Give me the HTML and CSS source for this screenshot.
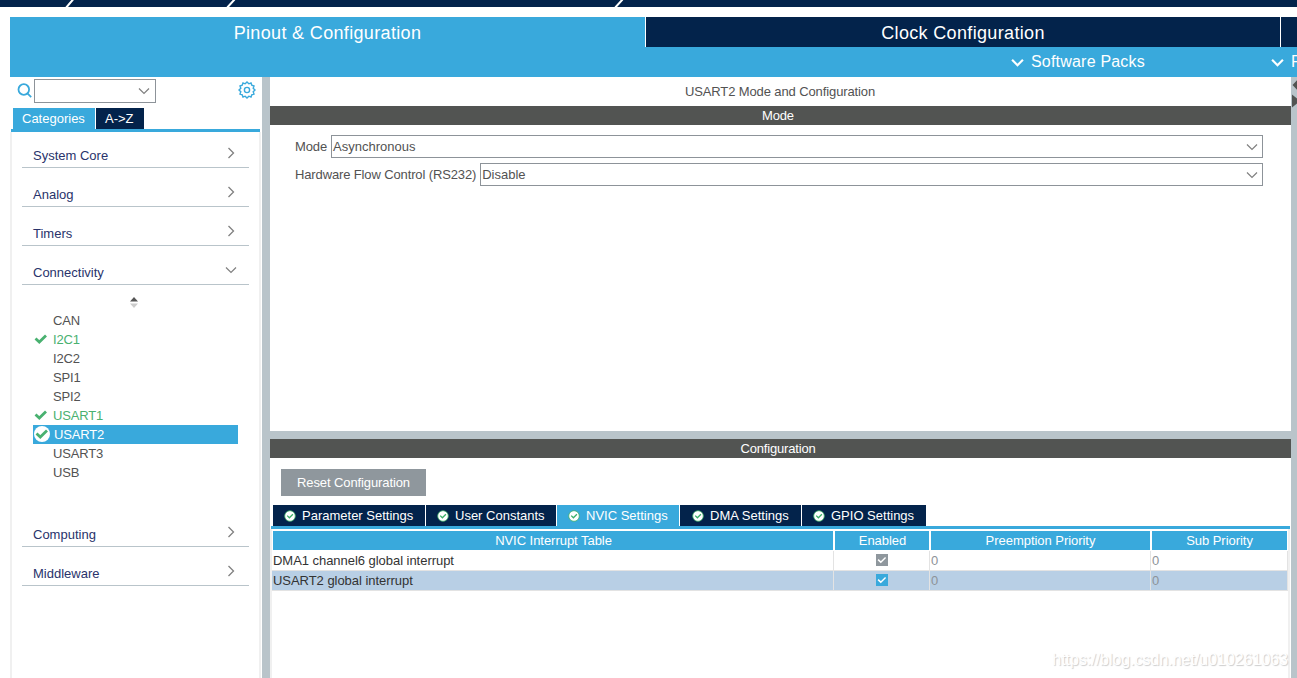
FILE: index.html
```html
<!DOCTYPE html>
<html lang="en">
	<head>
		<meta charset="utf-8">
		<title>Pinout &amp; Configuration</title>
		<link rel="stylesheet" href="styles.css">
	</head>
	<body>
		<!-- shared icons -->
		<svg class="defs" width="0" height="0">
			<symbol id="chevron-right" viewBox="0 0 8 12"><path d="M1.5 1L6.5 6L1.5 11" /></symbol>
			<symbol id="chevron-down" viewBox="0 0 12 8"><path d="M1 1.5L6 6.5L11 1.5" /></symbol>
			<symbol id="tick" viewBox="0 0 14 10"><path d="M1.5 4.5L5.3 8L12 1.5" /></symbol>
			<symbol id="badge" viewBox="0 0 12 12">
				<circle cx="6" cy="6" r="5.3" fill="#fff" stroke="#3cb068" stroke-width="0.8" />
				<path d="M3.2 5.6L5.4 7.8L8.9 4.3" fill="none" stroke="#3cb068" stroke-width="1.3" />
			</symbol>
		</svg>
		<div id="breadcrumb">
			<svg width="1297" height="7"><path d="M66.3 7.5L73 -0.5M227.3 7.5L234.5 -0.5M615.3 7.5L622.5 -0.5" /></svg>
		</div>
		<div id="maintabs">
			<div class="maintab active">Pinout &amp; Configuration</div>
			<div class="maintab">Clock Configuration</div>
			<div class="maintab last"></div>
		</div>
		<div id="submenu">
			<div class="menu packs"><svg class="menu-arrow"><use href="#chevron-down" /></svg><span>Software Packs</span></div>
			<div class="menu"><svg class="menu-arrow"><use href="#chevron-down" /></svg><span>P</span></div>
		</div>
		<div id="content">
			<div id="sidebar">
				<div id="search">
					<svg class="magnifier" viewBox="0 0 16 16"><circle cx="6.8" cy="6.5" r="5.3" /><path d="M10.4 10.4L14.2 14.2" /></svg>
					<div class="combo"><svg class="arrow-down"><use href="#chevron-down" /></svg></div>
					<svg class="gear" viewBox="0 0 18 18"><path d="M9 1L10.8 2.8L13 2L13.8 4.2L16 5L15.2 7.2L17 9L15.2 10.8L16 13L13.8 13.8L13 16L10.8 15.2L9 17L7.2 15.2L5 16L4.2 13.8L2 13L2.8 10.8L1 9L2.8 7.2L2 5L4.2 4.2L5 2L7.2 2.8Z" /><circle cx="9" cy="9" r="2.6" /></svg>
				</div>
				<div class="tabs">
					<div class="tab active w-cat">Categories</div>
					<div class="tab w-az">A-&gt;Z</div>
				</div>
				<div id="tree">
					<div class="group"><span>System Core</span><svg class="arrow-right"><use href="#chevron-right" /></svg></div>
					<div class="group"><span>Analog</span><svg class="arrow-right"><use href="#chevron-right" /></svg></div>
					<div class="group"><span>Timers</span><svg class="arrow-right"><use href="#chevron-right" /></svg></div>
					<div class="group"><span>Connectivity</span><svg class="arrow-down"><use href="#chevron-down" /></svg></div>
					<div id="sorter"><svg width="8" height="11"><path d="M4 0L8 4.5H0Z" fill="#555" /><path d="M0 6.5H8L4 11Z" fill="#ccc" /></svg></div>
					<div id="items">
						<div class="item">CAN</div>
						<div class="item on"><svg class="tick"><use href="#tick" /></svg>I2C1</div>
						<div class="item">I2C2</div>
						<div class="item">SPI1</div>
						<div class="item">SPI2</div>
						<div class="item on"><svg class="tick"><use href="#tick" /></svg>USART1</div>
						<div class="item selected"><span class="disc"><svg class="tick"><use href="#tick" /></svg></span>USART2</div>
						<div class="item">USART3</div>
						<div class="item">USB</div>
					</div>
					<div class="group"><span>Computing</span><svg class="arrow-right"><use href="#chevron-right" /></svg></div>
					<div class="group"><span>Middleware</span><svg class="arrow-right"><use href="#chevron-right" /></svg></div>
				</div>
			</div>
			<div id="main">
				<div id="title">USART2 Mode and Configuration</div>
				<div class="bar">Mode</div>
				<div id="mode">
					<div class="field"><label>Mode</label><div class="combo"><span>Asynchronous</span><svg class="arrow-down"><use href="#chevron-down" /></svg></div></div>
					<div class="field"><label>Hardware Flow Control (RS232)</label><div class="combo"><span>Disable</span><svg class="arrow-down"><use href="#chevron-down" /></svg></div></div>
				</div>
				<div class="bar">Configuration</div>
				<div id="config">
					<button id="reset">Reset Configuration</button>
					<div class="tabs">
						<div class="tab w-param"><svg class="badge"><use href="#badge" /></svg>Parameter Settings</div>
						<div class="tab w-user"><svg class="badge"><use href="#badge" /></svg>User Constants</div>
						<div class="tab active w-nvic"><svg class="badge"><use href="#badge" /></svg>NVIC Settings</div>
						<div class="tab w-dma"><svg class="badge"><use href="#badge" /></svg>DMA Settings</div>
						<div class="tab w-gpio"><svg class="badge"><use href="#badge" /></svg>GPIO Settings</div>
					</div>
					<div id="nvic">
						<div class="row head"><div>NVIC Interrupt Table</div><div>Enabled</div><div>Preemption Priority</div><div>Sub Priority</div></div>
						<div class="row"><div>DMA1 channel6 global interrupt</div><div><span class="check locked"><svg class="tick"><use href="#tick" /></svg></span></div><div>0</div><div>0</div></div>
						<div class="row selected"><div>USART2 global interrupt</div><div><span class="check"><svg class="tick"><use href="#tick" /></svg></span></div><div>0</div><div>0</div></div>
					</div>
				</div>
			</div>
			<div id="edge"><svg width="6" height="32"><path d="M9 -1L1.5 7L9 15Z M1 16.5L9 23L1 29.5Z" /></svg></div>
		</div>
		<div id="watermark">https://blog.csdn.net/u010261063</div>
	</body>
</html>
```
FILE: styles.css
```css
:root {
	--navy: #03234b;
	--blue: #39a9dc;
	--split: #b9c4ca;
	--dark: #525452;
	--text: #525252;
	--green: #49b170;
	--frame: #f0f0f0;
}
* {
	box-sizing: border-box;
}
body {
	margin: 0;
	width: 1297px;
	height: 678px;
	overflow: hidden;
	position: relative;
	display: flex;
	flex-direction: column;
	background: #fff;
	color: var(--text);
	font: 13px/19px "Liberation Sans", Arial, sans-serif;
	white-space: nowrap;
}
svg {
	display: block;
	flex: none;
	fill: none;
	stroke-linejoin: miter;
}
.defs {
	position: absolute;
}
#breadcrumb {
	height: 7px;
	background: var(--navy);
}
#breadcrumb svg {
	stroke: #fff;
	stroke-width: 2;
}
#maintabs {
	display: flex;
	gap: 1px;
	margin: 10px 0 0 10px;
	height: 30px;
}
.maintab {
	flex: none;
	width: 634px;
	background: var(--navy);
	color: #fff;
	font-size: 18px;
	letter-spacing: 0.34px;
	line-height: 32px;
	text-align: center;
}
.maintab.active {
	width: 635px;
	background: var(--blue);
}
.maintab.last {
	flex: 1;
	width: auto;
}
#submenu {
	display: flex;
	margin-left: 10px;
	padding-left: 1001px;
	height: 30px;
	background: var(--blue);
	color: #fff;
	font-size: 16px;
	line-height: 30px;
	overflow: hidden;
}
.menu {
	display: flex;
	align-items: center;
	gap: 7px;
}
.packs {
	width: 260px;
	flex: none;
	letter-spacing: 0.2px;
}
.menu-arrow {
	width: 13px;
	height: 9px;
	stroke: #fff;
	stroke-width: 2;
}
#content {
	flex: 1;
	display: flex;
	min-height: 0;
}
#sidebar {
	width: 252px;
	margin-left: 10px;
	display: flex;
	flex-direction: column;
}
#search {
	display: flex;
	height: 31px;
	padding: 2px 6px 0 6px;
}
.magnifier {
	width: 16px;
	height: 16px;
	margin: 4px 2px 0 1px;
	stroke: var(--blue);
	stroke-width: 1.8;
}
#search .combo {
	width: 122px;
	height: 24px;
	margin-left: -1px;
}
.gear {
	width: 18px;
	height: 18px;
	margin: 2px 0 0 auto;
	stroke: var(--blue);
	stroke-width: 1.4;
}
.combo {
	display: flex;
	align-items: center;
	justify-content: space-between;
	border: 1px solid #8d9399;
	padding: 0 5px 0 1px;
}
.arrow-down {
	width: 12px;
	height: 8px;
	margin-left: auto;
	stroke: #808080;
	stroke-width: 1.2;
}
.arrow-right {
	width: 8px;
	height: 12px;
	stroke: #808080;
	stroke-width: 1.3;
}
.tabs {
	display: flex;
	gap: 1px;
	height: 24px;
	padding-left: 2px;
	margin: 0 2px 0 1px;
	border-bottom: 3px solid var(--blue);
}
.tab {
	display: flex;
	align-items: center;
	background: var(--navy);
	color: #fff;
	padding-left: 9px;
}
.tab.active {
	background: var(--blue);
}
.w-cat { width: 82px; }
.w-az { width: 48px; }
.w-param { width: 152px; }
.w-user { width: 130px; }
.w-nvic { width: 122px; }
.w-dma { width: 121px; }
.w-gpio { width: 124px; }
#tree {
	flex: 1;
	margin-right: 1px;
	padding: 0 10px;
	border: solid var(--frame);
	border-width: 0 2px;
}
.group {
	display: flex;
	justify-content: space-between;
	height: 39px;
	border-bottom: 1px solid var(--split);
	padding: 17px 14px 0 11px;
	color: #29336b;
}
.group:first-child {
	height: 36px;
	padding-top: 14px;
}
.group svg {
	margin-top: 1px;
}
.group .arrow-down {
	margin: 3px -2px 0 0;
}
#sorter {
	height: 26px;
	padding: 12px 0 0 108px;
}
#items {
	margin: 0 0 26px 11px;
	width: 205px;
	letter-spacing: -0.15px;
}
.item {
	display: flex;
	align-items: center;
	height: 19px;
	padding-left: 20px;
}
.tick {
	width: 14px;
	height: 10px;
	stroke: var(--green);
	stroke-width: 2.8;
}
.item .tick {
	margin-bottom: 1px;
}
.item.on {
	padding-left: 1px;
	gap: 5px;
	color: var(--green);
}
.item.selected {
	padding-left: 1px;
	gap: 4px;
	background: var(--blue);
	color: #fff;
}
.disc {
	width: 16px;
	height: 16px;
	margin-bottom: 1px;
	border-radius: 50%;
	background: #fff;
	display: flex;
	align-items: center;
	justify-content: center;
}
#main {
	width: 1029px;
	flex: none;
	border-left: 8px solid var(--split);
	display: flex;
	flex-direction: column;
}
#title {
	height: 29px;
	line-height: 29px;
	padding-right: 1px;
	text-align: center;
	letter-spacing: -0.11px;
}
.bar {
	height: 19px;
	background: var(--dark);
	color: #fff;
	text-align: center;
	padding-right: 5px;
	letter-spacing: -0.18px;
}
#mode {
	height: 314px;
	padding: 10px 28px 0 25px;
	border-bottom: 8px solid var(--split);
}
.field {
	display: flex;
	align-items: center;
	gap: 4px;
	height: 23px;
	margin-bottom: 5px;
}
.field label {
	letter-spacing: -0.13px;
}
.field .combo {
	flex: 1;
	height: 23px;
	padding-right: 4px;
}
#config {
	flex: 1;
	display: flex;
	flex-direction: column;
	padding-top: 11px;
}
#reset {
	align-self: flex-start;
	margin: 0 0 9px 11px;
	width: 145px;
	height: 27px;
	border: 0;
	padding: 0;
	background: #8f979d;
	color: #fff;
	font: inherit;
	letter-spacing: -0.1px;
}
#config .tabs {
	margin-right: 1px;
}
#config .tab {
	padding-left: 11px;
}
#config .w-dma {
	padding-left: 12px;
}
.badge {
	width: 12px;
	height: 12px;
	margin-right: 6px;
}
#nvic {
	flex: 1;
	margin-right: 1px;
	border: solid var(--frame);
	border-width: 0 2px;
}
.row {
	display: grid;
	grid-template-columns: 562px 96px 221px 137px;
	height: 20px;
	border-bottom: 1px solid #e3e3e3;
	color: #333;
	letter-spacing: -0.04px;
}
.row > div {
	border-right: 1px solid #e3e3e3;
	padding-left: 1px;
}
.row > div:nth-child(2) {
	display: flex;
	justify-content: center;
	align-items: center;
}
.row > div:nth-child(n+3) {
	color: #8d9399;
}
.row.head {
	height: 22px;
	padding-top: 2px;
	border-color: #fff;
}
.row.head > div {
	background: var(--blue);
	color: #fff;
	text-align: center;
	border: solid #fff;
	border-width: 0 1px;
}
.row.head > div:nth-child(n+3) {
	color: #fff;
	padding-left: 0;
}
.row.selected {
	background: #b8cfe5;
}
.check {
	width: 12px;
	height: 12px;
	margin: 0 1px 1px 0;
	background: var(--blue);
	display: flex;
	align-items: center;
	justify-content: center;
}
.check.locked {
	background: #8f979d;
}
.check .tick {
	width: 10px;
	height: 8px;
	stroke: #fff;
	stroke-width: 2;
}
#edge {
	flex: 1;
	background: var(--split);
	padding-top: 1px;
}
#edge path {
	fill: var(--dark);
}
#watermark {
	position: absolute;
	right: 9px;
	bottom: 9px;
	font-size: 16px;
	letter-spacing: -0.03px;
	color: #fff;
	text-shadow: 1px 1px 1px #ccc;
}
```
